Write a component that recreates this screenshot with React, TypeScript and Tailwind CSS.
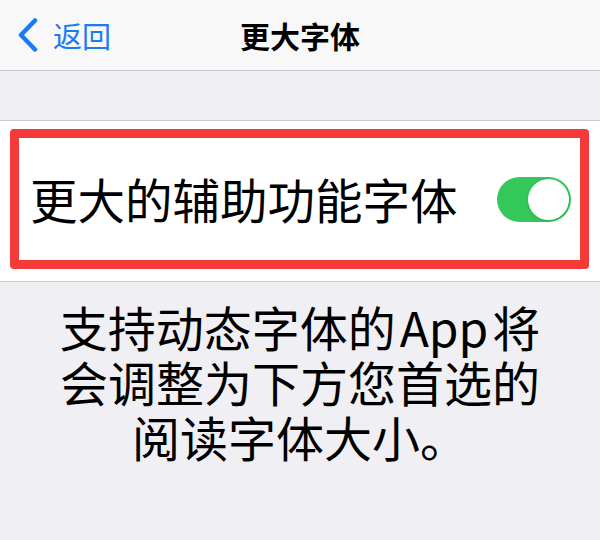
import React from 'react';

const font = { fontFamily: '"Noto Sans CJK SC", "Noto Sans", sans-serif' };

const Toggle: React.FC<{ on: boolean }> = ({ on }) => (
  <div
    className={`relative flex items-center w-[74px] h-[45px] rounded-full p-[2px] ${
      on ? 'bg-[#34c759] justify-end' : 'bg-[#e9e9eb] justify-start'
    }`}
  >
    <div className="w-[41px] h-[41px] rounded-full bg-white shadow-[0_1px_3px_rgba(0,0,0,0.15)]" />
  </div>
);

export default function App() {
  return (
    <div className="w-[600px] h-[540px] bg-[#efeff4] overflow-hidden text-black" style={font}>
      {/* nav bar */}
      <div className="h-[71px] bg-[#f8f8f8] border-b border-[#c8c7cc] grid grid-cols-[1fr_auto_1fr] items-center">
        <div className="flex items-center pl-[17px] gap-[14px] text-[#1a7cf5]">
          <svg width="22" height="34" viewBox="0 0 22 34" fill="none">
            <path d="M18 2.5 L4 17 L18 31.5" stroke="currentColor" strokeWidth="4.5" strokeLinecap="round" strokeLinejoin="round" />
          </svg>
          <span className="text-[29px] leading-none">返回</span>
        </div>
        <div className="text-[30px] font-semibold leading-none">更大字体</div>
        <div />
      </div>

      <div className="h-[49px]" />

      {/* setting row */}
      <div className="bg-white border-y border-[#c8c7cc] pt-[8px] pb-[12px] pl-[10px] pr-[11px]">
        <div className="h-[140px] border-[9px] border-[#f53a3a] rounded-[4px] flex items-center justify-between pl-[11px] pr-[9px]">
          <span className="text-[47.5px] leading-none">更大的辅助功能字体</span>
          <Toggle on />
        </div>
      </div>

      {/* footer */}
      <div className="pt-[20px] flex flex-col items-center gap-[7px] text-[48px] leading-none">
        <div>
          支持动态字体的<span className="px-[4px]">App</span>将
        </div>
        <div>会调整为下方您首选的</div>
        <div>阅读字体大小。</div>
      </div>
    </div>
  );
}
